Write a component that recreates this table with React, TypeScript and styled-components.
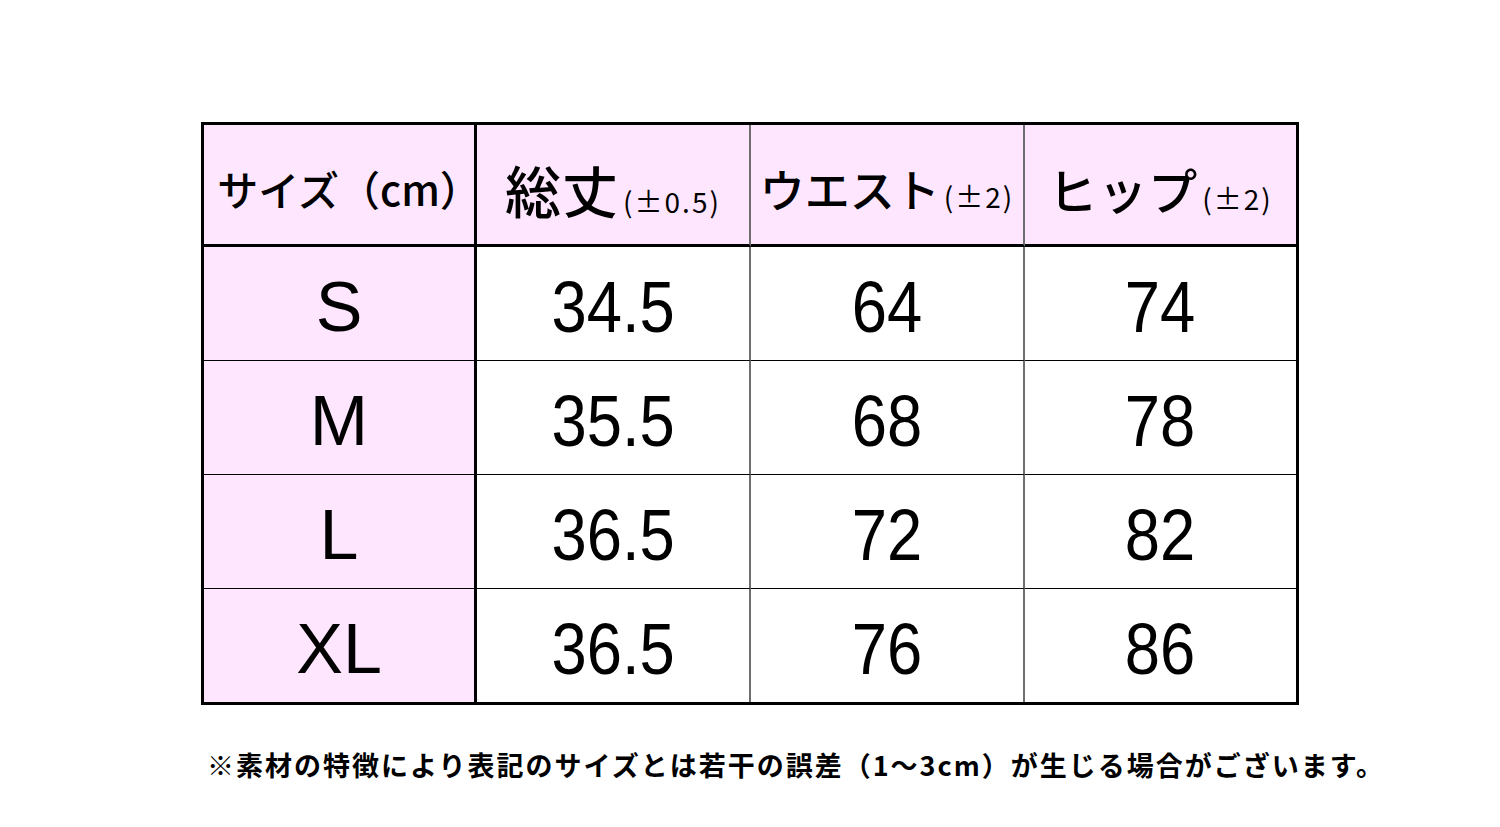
import React from 'react';
import styled, { createGlobalStyle } from 'styled-components';

const GlobalStyle = createGlobalStyle`
  html, body {
    margin: 0;
    padding: 0;
    background: #ffffff;
  }
  body {
    font-family: "Noto Sans CJK JP", "Liberation Sans", sans-serif;
    color: #000000;
  }
`;

const Page = styled.div`
  width: 1500px;
  height: 827px;
  box-sizing: border-box;
  padding: 122px 0 0 201px;
  background: #ffffff;
`;

const Table = styled.div`
  display: grid;
  grid-template-columns: 273px 274px 274px 271px;
  grid-template-rows: 122px 114px 114px 114px 113px;
  width: 1098px;
  box-sizing: border-box;
  border: 3px solid #000;
`;

const Cell = styled.div<{ $col: number; $head?: boolean; $last?: boolean }>`
  display: flex;
  align-items: center;
  justify-content: center;
  box-sizing: border-box;
  background: ${(p) => (p.$head || p.$col === 0 ? '#ffe6ff' : '#ffffff')};
  border-right: ${(p) =>
    p.$col === 0 ? '3px solid #000' : p.$col < 3 ? '2px solid #6e6e6e' : 'none'};
  border-bottom: ${(p) =>
    p.$head ? '3px solid #000' : p.$last ? 'none' : '1px solid #000'};
`;

const HeadLabel = styled.div<{ $shift?: number }>`
  display: flex;
  align-items: baseline;
  padding-top: 8px;
  padding-left: ${(p) => p.$shift ?? 0}px;
  white-space: nowrap;
  line-height: 1;
`;

const Main = styled.span<{ $size: number }>`
  font-size: ${(p) => p.$size}px;
  font-weight: 500;
  letter-spacing: ${(p) => (p.$size > 45 ? '1px' : '0')};
`;

const Tol = styled.span`
  font-size: 28px;
  font-weight: 400;
  letter-spacing: 2px;
  margin-left: 4px;
`;

const SizeMark = styled.span`
  font-family: "Liberation Sans", Arial, sans-serif;
  font-size: 70px;
  line-height: 1;
  padding-top: 6px;
`;

const Num = styled.span`
  display: inline-block;
  font-family: "Liberation Sans", Arial, sans-serif;
  font-size: 72px;
  line-height: 1;
  padding-top: 6px;
  transform: scaleX(0.88);
`;

const Note = styled.p`
  margin: 46px 0 0 6px;
  font-size: 27px;
  font-weight: 700;
  line-height: 1;
  letter-spacing: 2px;
  white-space: nowrap;
`;

const heads: { main: string; size: number; tol?: string; shift?: number }[] = [
  { main: 'サイズ（cm）', size: 41, shift: 20 },
  { main: '総丈', size: 56, tol: '(±0.5)' },
  { main: 'ウエスト', size: 45, tol: '(±2)' },
  { main: 'ヒップ', size: 49, tol: '(±2)' },
];

const rows = [
  ['S', '34.5', '64', '74'],
  ['M', '35.5', '68', '78'],
  ['L', '36.5', '72', '82'],
  ['XL', '36.5', '76', '86'],
];

export default function App() {
  return (
    <>
      <GlobalStyle />
      <Page>
        <Table>
          {heads.map((h, i) => (
            <Cell key={h.main} $col={i} $head>
              <HeadLabel $shift={h.shift}>
                <Main $size={h.size}>{h.main}</Main>
                {h.tol && <Tol>{h.tol}</Tol>}
              </HeadLabel>
            </Cell>
          ))}
          {rows.map((r, ri) =>
            r.map((v, ci) => (
              <Cell key={`${ri}-${ci}`} $col={ci} $last={ri === rows.length - 1}>
                {ci === 0 ? <SizeMark>{v}</SizeMark> : <Num>{v}</Num>}
              </Cell>
            ))
          )}
        </Table>
        <Note>※素材の特徴により表記のサイズとは若干の誤差（1～3cm）が生じる場合がございます。</Note>
      </Page>
    </>
  );
}
